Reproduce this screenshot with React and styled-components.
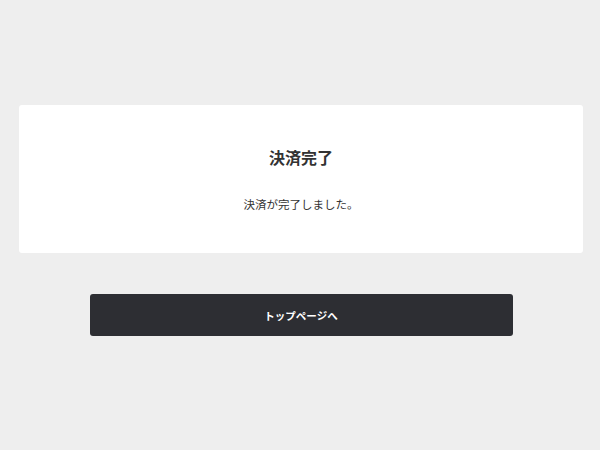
import React from 'react'
import styled, { createGlobalStyle } from 'styled-components'

const GlobalStyle = createGlobalStyle`
  html, body {
    margin: 0;
    padding: 0;
    background: #eeeeee;
  }
  body {
    font-family: "Noto Sans CJK JP", "Noto Sans", sans-serif;
    color: #333333;
  }
`

export default function App() {
  return (
    <>
      <GlobalStyle />
      <Page>
        <Card>
          <Title>決済完了</Title>
          <Message>決済が完了しました。</Message>
        </Card>
        <TopButton type="button">トップページへ</TopButton>
      </Page>
    </>
  )
}

const Page = styled.main`
  display: flex;
  flex-direction: column;
  align-items: center;
  padding: 105px 17px 0 19px;
  min-height: 450px;
  box-sizing: border-box;
`

const Card = styled.section`
  width: 100%;
  box-sizing: border-box;
  background: #ffffff;
  border-radius: 3px;
  padding: 40px 20px;
  display: flex;
  flex-direction: column;
  align-items: center;
  gap: 26px;
`

const Title = styled.h1`
  margin: 0;
  font-size: 16px;
  line-height: 24px;
  font-weight: 700;
  color: #333333;
`

const Message = styled.p`
  margin: 0;
  font-size: 11.5px;
  line-height: 18px;
  color: #333333;
`

const TopButton = styled.button`
  margin-top: 41px;
  width: 75%;
  height: 42px;
  border: none;
  border-radius: 3px;
  background: #2d2e33;
  color: #ffffff;
  font-family: inherit;
  font-size: 10.5px;
  font-weight: 700;
  cursor: pointer;
`
